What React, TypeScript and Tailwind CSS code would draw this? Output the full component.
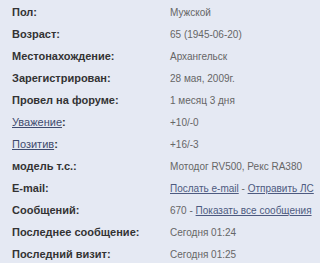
const rows: { label: React.ReactNode; value: React.ReactNode }[] = [
  { label: "Пол:", value: "Мужской" },
  { label: "Возраст:", value: "65 (1945-06-20)" },
  { label: "Местонахождение:", value: "Архангельск" },
  { label: "Зарегистрирован:", value: "28 мая, 2009г." },
  { label: "Провел на форуме:", value: "1 месяц 3 дня" },
  {
    label: (
      <>
        <a className="font-normal text-[#3f4b6e] underline">Уважение</a>:
      </>
    ),
    value: "+10/-0",
  },
  {
    label: (
      <>
        <a className="font-normal text-[#3f4b6e] underline">Позитив</a>:
      </>
    ),
    value: "+16/-3",
  },
  { label: "модель т.с.:", value: "Мотодог RV500, Рекс RA380" },
  {
    label: "E-mail:",
    value: (
      <>
        <a className="text-[#4d5a80] underline">Послать e-mail</a> -{" "}
        <a className="text-[#4d5a80] underline">Отправить ЛС</a>
      </>
    ),
  },
  {
    label: "Сообщений:",
    value: (
      <>
        670 - <a className="text-[#4d5a80] underline">Показать все сообщения</a>
      </>
    ),
  },
  { label: "Последнее сообщение:", value: "Сегодня 01:24" },
  { label: "Последний визит:", value: "Сегодня 01:25" },
];

export default function App() {
  return (
    <div className="h-[263px] w-[320px] overflow-hidden bg-[#e5e9f3] pt-px font-['Liberation_Sans',Arial,sans-serif]">
      {rows.map((row, i) => (
        <div key={i} className="grid h-[22px] grid-cols-[170px_1fr] items-center">
          <div className="whitespace-nowrap pl-3 text-[11px] font-bold text-[#333]">{row.label}</div>
          <div className="whitespace-nowrap text-[10px] text-[#666]">{row.value}</div>
        </div>
      ))}
    </div>
  );
}
